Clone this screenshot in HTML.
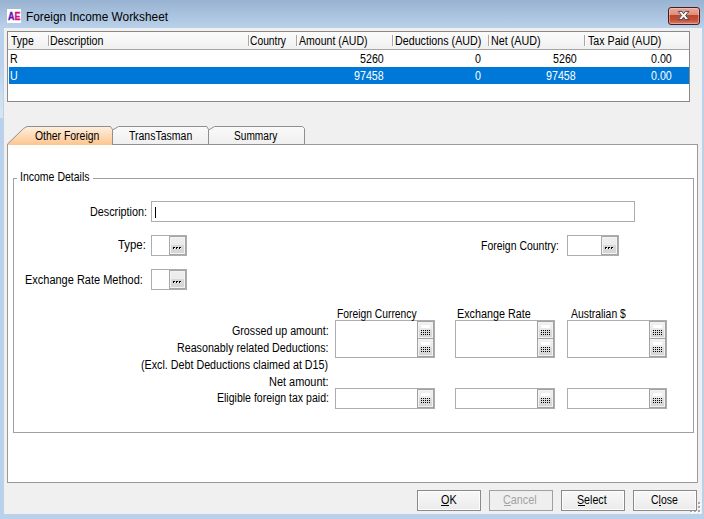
<!DOCTYPE html>
<html><head><meta charset="utf-8">
<style>
*{box-sizing:border-box;margin:0;padding:0}
html,body{width:704px;height:519px;overflow:hidden}
body{position:relative;background:#b9d1ea;font-family:"Liberation Sans",sans-serif;font-size:12px;color:#000}
.a{position:absolute}
.t{position:absolute;white-space:nowrap;line-height:13px;font-size:12px;transform-origin:0 0}
#title{left:0;top:0;width:704px;height:28px;background:linear-gradient(#98b2d1,#b9d1ea)}
#client{left:4px;top:28px;width:698px;height:486px;background:#f0f0f0}
#lv{left:7px;top:31px;width:683px;height:71px;border:1px solid #898989;background:#fff}
.sep{position:absolute;top:35px;width:1px;height:11px;background:#a8a8a8;box-shadow:1px 0 0 #fff}
.box{position:absolute;background:#fff;border:1px solid #abadb3}
.eb{position:absolute;top:0;right:0;bottom:0;border:1px solid #a6a6a6;background:linear-gradient(#eeeeee 0,#ececec 45%,#d8d8d8 45%,#d5d5d5 100%);box-shadow:inset 0 0 0 1px #f3f3f3}
.btn{position:absolute;top:490px;width:64px;height:21px;border:1px solid #8a8a8a;background:linear-gradient(#f8f8f8,#ebebeb);box-shadow:inset 0 0 0 1px #fdfdfd}
.ul{position:absolute;height:1px;top:505px;background:#000}
</style></head><body>
<div id="title" class="a"></div>
<div class="a" style="left:7px;top:9px;width:14px;height:14px;background:#fff"></div>
<svg class="a" style="left:7px;top:9px" width="14" height="14"><defs><linearGradient id="ae" x1="0" y1="0" x2="1" y2="0"><stop offset="0" stop-color="#4a0cb0"/><stop offset="0.45" stop-color="#6a0cb0"/><stop offset="0.6" stop-color="#c0108a"/><stop offset="1" stop-color="#f01070"/></linearGradient></defs><text x="1" y="10.9" font-family="Liberation Sans" font-weight="bold" font-size="10.6" textLength="12.4" lengthAdjust="spacingAndGlyphs" fill="url(#ae)" stroke="url(#ae)" stroke-width="0.3">AE</text></svg>
<div class="a" style="left:668px;top:7px;width:32px;height:18px;border:1px solid #4b1c1c;border-radius:3px;background:linear-gradient(#eaa99a 0,#dc8f7d 42%,#c0442a 45%,#c4503a 75%,#d8806a 100%);box-shadow:inset 0 0 0 1px rgba(255,210,200,0.45)"></div>
<svg class="a" style="left:668px;top:7px" width="32" height="18"><path d="M10.2 4.4 L13.9 4.4 L15.6 6.8 L17.3 4.4 L21 4.4 L17.6 8.5 L21 12.6 L17.3 12.6 L15.6 10.2 L13.9 12.6 L10.2 12.6 L13.6 8.5 Z" fill="#f6f6f6" stroke="#4a4c58" stroke-width="1" stroke-linejoin="round"/></svg>
<div id="client" class="a"></div>
<div class="a" style="left:0;top:62px;width:3px;height:56px;background:linear-gradient(#b9d1ea,#d3e2f1 80%,#d8e6f3)"></div>
<div id="lv" class="a"></div>
<div class="a" style="left:8px;top:32px;width:681px;height:17px;background:linear-gradient(#fbfbfb,#f0f0f0)"></div>
<div class="a" style="left:8px;top:49px;width:681px;height:1px;background:#a5a5a5"></div>
<div class="sep" style="left:48px"></div>
<div class="sep" style="left:248px"></div>
<div class="sep" style="left:296px"></div>
<div class="sep" style="left:392px"></div>
<div class="sep" style="left:488px"></div>
<div class="sep" style="left:584px"></div>
<div class="a" style="left:9px;top:67px;width:680px;height:17px;background:#0078d7"></div>
<div class="a" style="left:7px;top:144px;width:691px;height:339px;border:1px solid #9a9a9a;background:#fff"></div>
<svg class="a" style="left:0;top:120px" width="320" height="30">
<defs>
<linearGradient id="g1" x1="0" y1="0" x2="0" y2="1"><stop offset="0" stop-color="#fff0e0"/><stop offset="1" stop-color="#fdc792"/></linearGradient>
<linearGradient id="g2" x1="0" y1="0" x2="0" y2="1"><stop offset="0" stop-color="#fafafa"/><stop offset="1" stop-color="#efefef"/></linearGradient>
<linearGradient id="cg" x1="0" y1="0" x2="0" y2="1"><stop offset="0" stop-color="#f2f2f2"/><stop offset="0.45" stop-color="#ebebeb"/><stop offset="0.5" stop-color="#dddddd"/><stop offset="1" stop-color="#d4d4d4"/></linearGradient>
</defs>
<path d="M112.5 24.5 L112.5 10 L118.5 6.5 L206.8 6.5 L208.5 9.5 L208.5 24.5 Z" fill="url(#g2)" stroke="#8e8f8f"/>
<path d="M208.5 24.5 L208.5 10 L214.5 6.5 L302.5 6.5 L304.5 8.5 L304.5 24.5 Z" fill="url(#g2)" stroke="#8e8f8f"/>
<path d="M7.5 24 L23.5 8.5 L27 6.5 L110.5 6.5 L112.5 9.5 L112.5 24" fill="url(#g1)" stroke="#8e8f8f"/>
<rect x="8" y="24" width="104" height="1" fill="#fdc792"/>
</svg>
<div class="a" style="left:13px;top:178px;width:681px;height:255px;border:1px solid #a0a0a0"></div>
<div class="a" style="left:17px;top:172px;width:76px;height:12px;background:#fff"></div>
<div class="box" style="left:151px;top:201px;width:484px;height:21px"></div>
<div class="a" style="left:155px;top:207px;width:1px;height:11px;background:#000"></div>
<div class="box" style="left:151px;top:235px;width:36px;height:21px"><div class="eb" style="width:17px"><svg width="17" height="19" style="position:absolute;left:-1px;top:-1px"><rect x="4" y="11" width="2" height="1" fill="#000"/><rect x="4" y="12" width="1" height="1" fill="#000"/><rect x="5" y="12" width="1" height="1" fill="#fff"/><rect x="7" y="11" width="2" height="1" fill="#000"/><rect x="7" y="12" width="1" height="1" fill="#000"/><rect x="8" y="12" width="1" height="1" fill="#fff"/><rect x="10" y="11" width="2" height="1" fill="#000"/><rect x="10" y="12" width="1" height="1" fill="#000"/><rect x="11" y="12" width="1" height="1" fill="#fff"/></svg></div></div>
<div class="box" style="left:567px;top:235px;width:52px;height:21px"><div class="eb" style="width:17px"><svg width="17" height="19" style="position:absolute;left:-1px;top:-1px"><rect x="4" y="11" width="2" height="1" fill="#000"/><rect x="4" y="12" width="1" height="1" fill="#000"/><rect x="5" y="12" width="1" height="1" fill="#fff"/><rect x="7" y="11" width="2" height="1" fill="#000"/><rect x="7" y="12" width="1" height="1" fill="#000"/><rect x="8" y="12" width="1" height="1" fill="#fff"/><rect x="10" y="11" width="2" height="1" fill="#000"/><rect x="10" y="12" width="1" height="1" fill="#000"/><rect x="11" y="12" width="1" height="1" fill="#fff"/></svg></div></div>
<div class="box" style="left:151px;top:269px;width:36px;height:21px"><div class="eb" style="width:17px"><svg width="17" height="19" style="position:absolute;left:-1px;top:-1px"><rect x="4" y="11" width="2" height="1" fill="#000"/><rect x="4" y="12" width="1" height="1" fill="#000"/><rect x="5" y="12" width="1" height="1" fill="#fff"/><rect x="7" y="11" width="2" height="1" fill="#000"/><rect x="7" y="12" width="1" height="1" fill="#000"/><rect x="8" y="12" width="1" height="1" fill="#fff"/><rect x="10" y="11" width="2" height="1" fill="#000"/><rect x="10" y="12" width="1" height="1" fill="#000"/><rect x="11" y="12" width="1" height="1" fill="#fff"/></svg></div></div>
<div class="box" style="left:335px;top:320px;width:100px;height:38px"></div><svg class="a" style="left:417px;top:321px" width="17" height="18"><rect x="0.5" y="0.5" width="16" height="17" fill="url(#cg)" stroke="#a2a2a2"/><rect x="1.5" y="1.5" width="14" height="15" fill="none" stroke="#f1f1f1"/><rect x="4" y="4" width="9" height="3" fill="#fff"/><g fill="#000"><rect x="4" y="9" width="1" height="1"/><rect x="4" y="11" width="1" height="1"/><rect x="4" y="13" width="1" height="1"/><rect x="6" y="9" width="1" height="1"/><rect x="6" y="11" width="1" height="1"/><rect x="6" y="13" width="1" height="1"/><rect x="8" y="9" width="1" height="1"/><rect x="8" y="11" width="1" height="1"/><rect x="8" y="13" width="1" height="1"/><rect x="10" y="9" width="1" height="1"/><rect x="10" y="11" width="1" height="1"/><rect x="10" y="13" width="1" height="1"/><rect x="12" y="9" width="1" height="1"/><rect x="12" y="11" width="1" height="1"/><rect x="12" y="13" width="1" height="1"/></g></svg><svg class="a" style="left:417px;top:338px" width="17" height="19"><rect x="0.5" y="0.5" width="16" height="18" fill="url(#cg)" stroke="#a2a2a2"/><rect x="1.5" y="1.5" width="14" height="16" fill="none" stroke="#f1f1f1"/><rect x="4" y="4" width="9" height="3" fill="#fff"/><g fill="#000"><rect x="4" y="9" width="1" height="1"/><rect x="4" y="11" width="1" height="1"/><rect x="4" y="13" width="1" height="1"/><rect x="6" y="9" width="1" height="1"/><rect x="6" y="11" width="1" height="1"/><rect x="6" y="13" width="1" height="1"/><rect x="8" y="9" width="1" height="1"/><rect x="8" y="11" width="1" height="1"/><rect x="8" y="13" width="1" height="1"/><rect x="10" y="9" width="1" height="1"/><rect x="10" y="11" width="1" height="1"/><rect x="10" y="13" width="1" height="1"/><rect x="12" y="9" width="1" height="1"/><rect x="12" y="11" width="1" height="1"/><rect x="12" y="13" width="1" height="1"/></g></svg>
<div class="box" style="left:335px;top:388px;width:100px;height:21px"></div><svg class="a" style="left:417px;top:389px" width="17" height="19"><rect x="0.5" y="0.5" width="16" height="18" fill="url(#cg)" stroke="#a2a2a2"/><rect x="1.5" y="1.5" width="14" height="16" fill="none" stroke="#f1f1f1"/><rect x="4" y="4" width="9" height="3" fill="#fff"/><g fill="#000"><rect x="4" y="9" width="1" height="1"/><rect x="4" y="11" width="1" height="1"/><rect x="4" y="13" width="1" height="1"/><rect x="6" y="9" width="1" height="1"/><rect x="6" y="11" width="1" height="1"/><rect x="6" y="13" width="1" height="1"/><rect x="8" y="9" width="1" height="1"/><rect x="8" y="11" width="1" height="1"/><rect x="8" y="13" width="1" height="1"/><rect x="10" y="9" width="1" height="1"/><rect x="10" y="11" width="1" height="1"/><rect x="10" y="13" width="1" height="1"/><rect x="12" y="9" width="1" height="1"/><rect x="12" y="11" width="1" height="1"/><rect x="12" y="13" width="1" height="1"/></g></svg>
<div class="box" style="left:455px;top:320px;width:100px;height:38px"></div><svg class="a" style="left:537px;top:321px" width="17" height="18"><rect x="0.5" y="0.5" width="16" height="17" fill="url(#cg)" stroke="#a2a2a2"/><rect x="1.5" y="1.5" width="14" height="15" fill="none" stroke="#f1f1f1"/><rect x="4" y="4" width="9" height="3" fill="#fff"/><g fill="#000"><rect x="4" y="9" width="1" height="1"/><rect x="4" y="11" width="1" height="1"/><rect x="4" y="13" width="1" height="1"/><rect x="6" y="9" width="1" height="1"/><rect x="6" y="11" width="1" height="1"/><rect x="6" y="13" width="1" height="1"/><rect x="8" y="9" width="1" height="1"/><rect x="8" y="11" width="1" height="1"/><rect x="8" y="13" width="1" height="1"/><rect x="10" y="9" width="1" height="1"/><rect x="10" y="11" width="1" height="1"/><rect x="10" y="13" width="1" height="1"/><rect x="12" y="9" width="1" height="1"/><rect x="12" y="11" width="1" height="1"/><rect x="12" y="13" width="1" height="1"/></g></svg><svg class="a" style="left:537px;top:338px" width="17" height="19"><rect x="0.5" y="0.5" width="16" height="18" fill="url(#cg)" stroke="#a2a2a2"/><rect x="1.5" y="1.5" width="14" height="16" fill="none" stroke="#f1f1f1"/><rect x="4" y="4" width="9" height="3" fill="#fff"/><g fill="#000"><rect x="4" y="9" width="1" height="1"/><rect x="4" y="11" width="1" height="1"/><rect x="4" y="13" width="1" height="1"/><rect x="6" y="9" width="1" height="1"/><rect x="6" y="11" width="1" height="1"/><rect x="6" y="13" width="1" height="1"/><rect x="8" y="9" width="1" height="1"/><rect x="8" y="11" width="1" height="1"/><rect x="8" y="13" width="1" height="1"/><rect x="10" y="9" width="1" height="1"/><rect x="10" y="11" width="1" height="1"/><rect x="10" y="13" width="1" height="1"/><rect x="12" y="9" width="1" height="1"/><rect x="12" y="11" width="1" height="1"/><rect x="12" y="13" width="1" height="1"/></g></svg>
<div class="box" style="left:455px;top:388px;width:100px;height:21px"></div><svg class="a" style="left:537px;top:389px" width="17" height="19"><rect x="0.5" y="0.5" width="16" height="18" fill="url(#cg)" stroke="#a2a2a2"/><rect x="1.5" y="1.5" width="14" height="16" fill="none" stroke="#f1f1f1"/><rect x="4" y="4" width="9" height="3" fill="#fff"/><g fill="#000"><rect x="4" y="9" width="1" height="1"/><rect x="4" y="11" width="1" height="1"/><rect x="4" y="13" width="1" height="1"/><rect x="6" y="9" width="1" height="1"/><rect x="6" y="11" width="1" height="1"/><rect x="6" y="13" width="1" height="1"/><rect x="8" y="9" width="1" height="1"/><rect x="8" y="11" width="1" height="1"/><rect x="8" y="13" width="1" height="1"/><rect x="10" y="9" width="1" height="1"/><rect x="10" y="11" width="1" height="1"/><rect x="10" y="13" width="1" height="1"/><rect x="12" y="9" width="1" height="1"/><rect x="12" y="11" width="1" height="1"/><rect x="12" y="13" width="1" height="1"/></g></svg>
<div class="box" style="left:567px;top:320px;width:100px;height:38px"></div><svg class="a" style="left:649px;top:321px" width="17" height="18"><rect x="0.5" y="0.5" width="16" height="17" fill="url(#cg)" stroke="#a2a2a2"/><rect x="1.5" y="1.5" width="14" height="15" fill="none" stroke="#f1f1f1"/><rect x="4" y="4" width="9" height="3" fill="#fff"/><g fill="#000"><rect x="4" y="9" width="1" height="1"/><rect x="4" y="11" width="1" height="1"/><rect x="4" y="13" width="1" height="1"/><rect x="6" y="9" width="1" height="1"/><rect x="6" y="11" width="1" height="1"/><rect x="6" y="13" width="1" height="1"/><rect x="8" y="9" width="1" height="1"/><rect x="8" y="11" width="1" height="1"/><rect x="8" y="13" width="1" height="1"/><rect x="10" y="9" width="1" height="1"/><rect x="10" y="11" width="1" height="1"/><rect x="10" y="13" width="1" height="1"/><rect x="12" y="9" width="1" height="1"/><rect x="12" y="11" width="1" height="1"/><rect x="12" y="13" width="1" height="1"/></g></svg><svg class="a" style="left:649px;top:338px" width="17" height="19"><rect x="0.5" y="0.5" width="16" height="18" fill="url(#cg)" stroke="#a2a2a2"/><rect x="1.5" y="1.5" width="14" height="16" fill="none" stroke="#f1f1f1"/><rect x="4" y="4" width="9" height="3" fill="#fff"/><g fill="#000"><rect x="4" y="9" width="1" height="1"/><rect x="4" y="11" width="1" height="1"/><rect x="4" y="13" width="1" height="1"/><rect x="6" y="9" width="1" height="1"/><rect x="6" y="11" width="1" height="1"/><rect x="6" y="13" width="1" height="1"/><rect x="8" y="9" width="1" height="1"/><rect x="8" y="11" width="1" height="1"/><rect x="8" y="13" width="1" height="1"/><rect x="10" y="9" width="1" height="1"/><rect x="10" y="11" width="1" height="1"/><rect x="10" y="13" width="1" height="1"/><rect x="12" y="9" width="1" height="1"/><rect x="12" y="11" width="1" height="1"/><rect x="12" y="13" width="1" height="1"/></g></svg>
<div class="box" style="left:567px;top:388px;width:100px;height:21px"></div><svg class="a" style="left:649px;top:389px" width="17" height="19"><rect x="0.5" y="0.5" width="16" height="18" fill="url(#cg)" stroke="#a2a2a2"/><rect x="1.5" y="1.5" width="14" height="16" fill="none" stroke="#f1f1f1"/><rect x="4" y="4" width="9" height="3" fill="#fff"/><g fill="#000"><rect x="4" y="9" width="1" height="1"/><rect x="4" y="11" width="1" height="1"/><rect x="4" y="13" width="1" height="1"/><rect x="6" y="9" width="1" height="1"/><rect x="6" y="11" width="1" height="1"/><rect x="6" y="13" width="1" height="1"/><rect x="8" y="9" width="1" height="1"/><rect x="8" y="11" width="1" height="1"/><rect x="8" y="13" width="1" height="1"/><rect x="10" y="9" width="1" height="1"/><rect x="10" y="11" width="1" height="1"/><rect x="10" y="13" width="1" height="1"/><rect x="12" y="9" width="1" height="1"/><rect x="12" y="11" width="1" height="1"/><rect x="12" y="13" width="1" height="1"/></g></svg>
<div class="a" style="left:699px;top:503px;width:2px;height:2px;background:#fff"></div><div class="a" style="left:698px;top:502px;width:2px;height:2px;background:#a8a8a8"></div>
<div class="a" style="left:699px;top:507px;width:2px;height:2px;background:#fff"></div><div class="a" style="left:698px;top:506px;width:2px;height:2px;background:#a8a8a8"></div>
<div class="a" style="left:699px;top:511px;width:2px;height:2px;background:#fff"></div><div class="a" style="left:698px;top:510px;width:2px;height:2px;background:#a8a8a8"></div>
<div class="a" style="left:695px;top:511px;width:2px;height:2px;background:#fff"></div><div class="a" style="left:694px;top:510px;width:2px;height:2px;background:#a8a8a8"></div>
<div class="a" style="left:691px;top:511px;width:2px;height:2px;background:#fff"></div><div class="a" style="left:690px;top:510px;width:2px;height:2px;background:#a8a8a8"></div>
<div class="a" style="left:695px;top:507px;width:2px;height:2px;background:#fff"></div><div class="a" style="left:694px;top:506px;width:2px;height:2px;background:#a8a8a8"></div>
<div class="a" style="left:691px;top:507px;width:2px;height:2px;background:#fff"></div><div class="a" style="left:690px;top:506px;width:2px;height:2px;background:#a8a8a8"></div>
<div class="a" style="left:695px;top:503px;width:2px;height:2px;background:#fff"></div><div class="a" style="left:694px;top:502px;width:2px;height:2px;background:#a8a8a8"></div>
<div class="btn" style="left:417px"></div>
<div class="btn" style="left:489px;background:#efefef;border-color:#a0a0a0;box-shadow:none"></div>
<div class="btn" style="left:561px"></div>
<div class="btn" style="left:633px"></div>
<div class="ul" style="left:441px;width:8px"></div>
<div class="ul" style="left:504px;width:7px;background:#a3a3a3"></div>
<div class="ul" style="left:578px;width:7px"></div>
<div class="ul" style="left:659px;width:2px"></div>
<div class="t" style="left:25.51px;top:11px;color:#000;transform:scaleX(0.9874)">Foreign Income Worksheet</div>
<div class="t" style="left:10.50px;top:35px;color:#000;transform:scaleX(0.8731)">Type</div>
<div class="t" style="left:50.41px;top:35px;color:#000;transform:scaleX(0.8897)">Description</div>
<div class="t" style="left:250.04px;top:35px;color:#000;transform:scaleX(0.8561)">Country</div>
<div class="t" style="left:299.00px;top:35px;color:#000;transform:scaleX(0.8779)">Amount (AUD)</div>
<div class="t" style="left:394.81px;top:35px;color:#000;transform:scaleX(0.8926)">Deductions (AUD)</div>
<div class="t" style="left:490.70px;top:35px;color:#000;transform:scaleX(0.8963)">Net (AUD)</div>
<div class="t" style="left:587.70px;top:35px;color:#000;transform:scaleX(0.8878)">Tax Paid (AUD)</div>
<div class="t" style="left:9.71px;top:53px;color:#000;transform:scaleX(0.8900)">R</div>
<div class="t" style="left:360.46px;top:53px;color:#000;transform:scaleX(0.8900)">5260</div>
<div class="t" style="left:474.86px;top:53px;color:#000;transform:scaleX(0.8900)">0</div>
<div class="t" style="left:552.56px;top:53px;color:#000;transform:scaleX(0.8900)">5260</div>
<div class="t" style="left:651.33px;top:53px;color:#000;transform:scaleX(0.8900)">0.00</div>
<div class="t" style="left:9.71px;top:70px;color:#fff;transform:scaleX(0.8900)">U</div>
<div class="t" style="left:354.23px;top:70px;color:#fff;transform:scaleX(0.8900)">97458</div>
<div class="t" style="left:474.86px;top:70px;color:#fff;transform:scaleX(0.8900)">0</div>
<div class="t" style="left:546.33px;top:70px;color:#fff;transform:scaleX(0.8900)">97458</div>
<div class="t" style="left:651.33px;top:70px;color:#fff;transform:scaleX(0.8900)">0.00</div>
<div class="t" style="left:34.90px;top:130px;color:#000;transform:scaleX(0.8685)">Other Foreign</div>
<div class="t" style="left:129.00px;top:130px;color:#000;transform:scaleX(0.8750)">TransTasman</div>
<div class="t" style="left:234.36px;top:130px;color:#000;transform:scaleX(0.8440)">Summary</div>
<div class="t" style="left:20.02px;top:171px;color:#000;transform:scaleX(0.8756)">Income Details</div>
<div class="t" style="left:89.70px;top:206px;color:#000;transform:scaleX(0.9000)">Description:</div>
<div class="t" style="left:117.90px;top:239px;color:#000;transform:scaleX(0.9500)">Type:</div>
<div class="t" style="left:481.43px;top:240px;color:#000;transform:scaleX(0.8724)">Foreign Country:</div>
<div class="t" style="left:25.39px;top:274px;color:#000;transform:scaleX(0.9150)">Exchange Rate Method:</div>
<div class="t" style="left:337.44px;top:308px;color:#000;transform:scaleX(0.8587)">Foreign Currency</div>
<div class="t" style="left:457.40px;top:308px;color:#000;transform:scaleX(0.8988)">Exchange Rate</div>
<div class="t" style="left:570.60px;top:308px;color:#000;transform:scaleX(0.8651)">Australian $</div>
<div class="t" style="left:231.71px;top:325px;color:#000;transform:scaleX(0.8897)">Grossed up amount:</div>
<div class="t" style="left:177.21px;top:342px;color:#000;transform:scaleX(0.8911)">Reasonably related Deductions:</div>
<div class="t" style="left:141.41px;top:359px;color:#000;transform:scaleX(0.8933)">(Excl. Debt Deductions claimed at D15)</div>
<div class="t" style="left:269.49px;top:376px;color:#000;transform:scaleX(0.9111)">Net amount:</div>
<div class="t" style="left:217.12px;top:392px;color:#000;transform:scaleX(0.8784)">Eligible foreign tax paid:</div>
<div class="t" style="left:440.80px;top:494px;color:#000;transform:scaleX(0.9000)">OK</div>
<div class="t" style="left:503.30px;top:494px;color:#a3a3a3;transform:scaleX(0.9000)">Cancel</div>
<div class="t" style="left:577.41px;top:494px;color:#000;transform:scaleX(0.8875)">Select</div>
<div class="t" style="left:650.93px;top:494px;color:#000;transform:scaleX(0.8724)">Close</div>
</body></html>
